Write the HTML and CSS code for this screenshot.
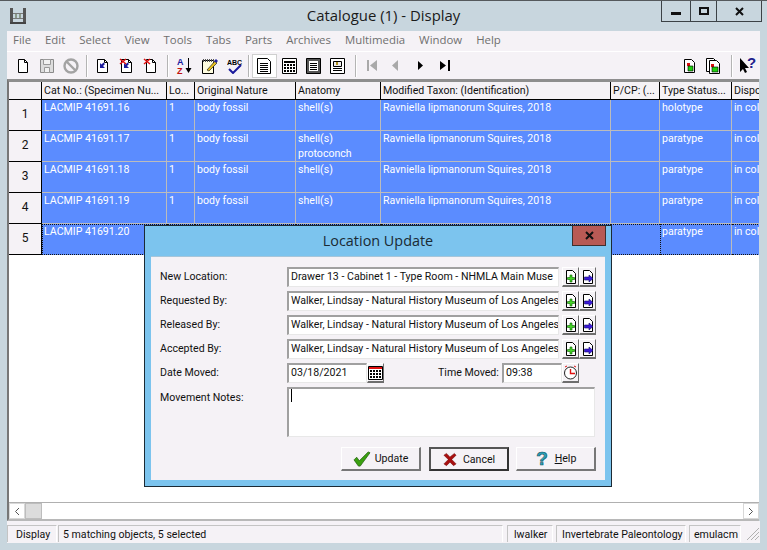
FILE: index.html
```html
<!DOCTYPE html>
<html lang="en">
<head>
    <meta charset="UTF-8">
    <title>Catalogue (1) - Display</title>
    <link rel="stylesheet" href="styles.css">
</head>
<body>
    <svg class="defs" width="0" height="0">
        <symbol id="doc" viewBox="0 0 16 16"><path d="M3.5 1.5h6l3 3v10h-9z" fill="#fff" stroke="#000"/><path d="M9.5 1.5v3h3" fill="none" stroke="#000"/></symbol>
        <symbol id="docback" viewBox="0 0 16 16"><path d="M2.5 1.5h7l3 3v10h-10z" fill="#fff" stroke="#000"/><path d="M9.5 1.5v3h3" fill="none" stroke="#000"/><path d="M5 5v5h5l-2-2 2-2-1.5-1.5-2 2z" fill="#1a1a9c"/></symbol>
        <symbol id="add" viewBox="0 0 14 16"><path d="M2.5 1.5h6l3 3v10h-9z" fill="#fff" stroke="#000"/><path d="M6 6h2v2.5h2.5v2H8V13H6v-2.5H3.5v-2H6z" fill="#46d828" stroke="#0a5a00" stroke-width=".6"/></symbol>
        <symbol id="go" viewBox="0 0 14 16"><path d="M2.5 1.5h6l3 3v10h-9z" fill="#fff" stroke="#000"/><path d="M3.5 8H8V6l4 3.5L8 13v-2H3.5z" fill="#3a18d8" stroke="#10086a" stroke-width=".6"/></symbol>
    </svg>

    <div class="window">
        <div class="titlebar">
            <svg class="appicon" width="18" height="18" viewBox="0 0 18 18"><path d="M1 1h3v16H1zM14 1h3v16h-3z" fill="#555"/><path d="M1 15h16v2H1z" fill="#444"/><path d="M4 6h10v1H4zM4 11h10v1H4z" fill="#777"/><path d="M6 7h2v4H6zM10 7h2v4h-2z" fill="#8a9a8a"/></svg>
            <div class="title">Catalogue (1) - Display</div>
            <div class="caption">
                <div class="capbtn capmin"><span></span></div>
                <div class="capbtn capmax"><span></span></div>
                <div class="capbtn capclose">
                    <svg width="9" height="9" viewBox="0 0 9 9"><path d="M1 1l7 7M8 1L1 8" stroke="#111" stroke-width="2"/></svg>
                </div>
            </div>
        </div>

        <div class="client">
            <div class="menubar">
                <span>File</span><span>Edit</span><span>Select</span><span>View</span><span>Tools</span><span>Tabs</span><span>Parts</span><span>Archives</span><span>Multimedia</span><span>Window</span><span>Help</span>
            </div>

            <div class="toolbar">
                <svg class="tool" width="16" height="16"><use href="#doc"/></svg>
                <svg class="tool" width="16" height="16" viewBox="0 0 16 16"><path d="M1.5 1.5h13v13h-13z" fill="#ddd" stroke="#8a8a8a"/><path d="M4.5 1.5h7v5h-7zM5.5 9.5h5v5h-5z" fill="#f2f2f2" stroke="#9a9a9a"/></svg>
                <svg class="tool" width="16" height="16" viewBox="0 0 16 16"><circle cx="8" cy="8" r="6.5" fill="none" stroke="#a3a3a3" stroke-width="2.4"/><path d="M3.5 3.5l9 9" stroke="#a3a3a3" stroke-width="2.4"/></svg>
                <i class="sep first"></i>
                <svg class="tool" width="16" height="16"><use href="#docback"/></svg>
                <svg class="tool" width="16" height="16" viewBox="0 0 16 16"><use href="#docback"/><path d="M1 1l6 5M7 1L1 6" stroke="#e01010" stroke-width="1.5"/></svg>
                <svg class="tool" width="16" height="16" viewBox="0 0 16 16"><use href="#doc"/><path d="M1 1l6 5M7 1L1 6" stroke="#e01010" stroke-width="1.5"/></svg>
                <i class="sep"></i>
                <svg class="tool sort" width="18" height="18" viewBox="0 0 18 18"><text x="1" y="8" class="sorta">A</text><text x="1" y="17" class="sortz">Z</text><path d="M12.5 1v13" stroke="#000"/><path d="M9.5 11h6l-3 5z"/></svg>
                <svg class="tool" width="18" height="18" viewBox="0 0 18 18"><path d="M1.5 3.5h11v13h-11z" fill="#fffde0" stroke="#000"/><path d="M2.5 2v3M4.5 2v3M6.5 2v3M8.5 2v3M10.5 2v3M12.5 2v3" stroke="#555"/><path d="M6 13l8-9 2 2-8 8z" fill="#e8c020" stroke="#222" stroke-width=".7"/><path d="M13 4l2-2 2 2-2 2z" fill="#2020a0"/></svg>
                <svg class="tool abcicon" width="16" height="16" viewBox="0 0 16 16"><text x="0" y="7" class="abc">ABC</text><path d="M2 11l4 4 8-8" fill="none" stroke="#1a1a9c" stroke-width="2"/></svg>
                <i class="sep"></i>
                <div class="pressed">
                    <svg width="16" height="16" viewBox="0 0 16 16"><path d="M.5.5h10l3 3v12H.5z" fill="#fff" stroke="#000"/><path d="M3 5.5h8M3 7.5h8M3 9.5h8M3 11.5h8M3 13.5h8" stroke="#000"/></svg>
                </div>
                <svg class="tool" width="16" height="16" viewBox="0 0 16 16"><path d="M.5.5h14v15H.5z" fill="#fff" stroke="#000"/><path d="M2 3h11v2H2zM2 6h2v2H2zM5 6h2v2H5zM8 6h2v2H8zM11 6h2v2h-2zM2 9h2v2H2zM5 9h2v2H5zM8 9h2v2H8zM11 9h2v2h-2zM2 12h2v2H2zM5 12h2v2H5zM8 12h2v2H8zM11 12h2v2h-2z"/></svg>
                <svg class="tool" width="16" height="16" viewBox="0 0 16 16"><path d="M.5.5h14v15H.5z" fill="#555" stroke="#000"/><path d="M3 3h9v10H3z" fill="#fff"/><path d="M4 5.5h7M4 7.5h7M4 9.5h7M4 11.5h7" stroke="#000"/></svg>
                <svg class="tool lastview" width="16" height="16" viewBox="0 0 16 16"><path d="M.5.5h14v15H.5z" fill="#fff" stroke="#000"/><path d="M3.5 3.5h8v5h-8z" fill="#eee" stroke="#000"/><path d="M3 10.5h9M3 12.5h9" stroke="#000"/><path d="M6 4h2v3H6z" fill="#b09020"/></svg>
                <i class="sep navsep"></i>
                <svg class="tool navfirst" width="10" height="11" viewBox="0 0 10 11"><path d="M0 0h2v11H0zM10 0v11L3 5.5z" fill="#a9a9a9"/></svg>
                <svg class="tool navprev" width="8" height="11" viewBox="0 0 8 11"><path d="M7 0v11L1 5.5z" fill="#a9a9a9"/></svg>
                <svg class="tool navnext" width="8" height="11" viewBox="0 0 8 11"><path d="M2 1v9l5-4.5z"/></svg>
                <svg class="tool" width="10" height="11" viewBox="0 0 10 11"><path d="M0 1v9l6-4.5zM8 0h2v11H8z"/></svg>
                <div class="spacer"></div>
                <svg class="tool part1" width="14" height="16" viewBox="0 0 14 16"><path d="M1.5 1.5h7l3 3v10h-10z" fill="#fff" stroke="#000"/><path d="M4 5h3v3H4z" fill="#d81010"/><path d="M5 8h5v5H5z" fill="#20d010" stroke="#000" stroke-width=".6"/></svg>
                <svg class="tool part2" width="14" height="16" viewBox="0 0 14 16"><path d="M.5.5h7l3 3v10H.5z" fill="#fff" stroke="#000"/><path d="M3.5 2.5h7l3 3v10h-10z" fill="#fff" stroke="#000"/><path d="M5 6h3v3H5z" fill="#d81010"/><path d="M6 9h6v5H6z" fill="#20d010" stroke="#000" stroke-width=".6"/></svg>
                <i class="sep"></i>
                <svg class="tool help" width="17" height="17" viewBox="0 0 17 17"><path d="M1 1v14l3-3 2 4 2-1-2-4h4z"/><text x="8" y="11" class="q">?</text></svg>
            </div>

            <div class="gridframe">
                <div class="grid">
                    <div class="corner"></div>
                    <div class="hcell">Cat No.: (Specimen Nu...</div>
                    <div class="hcell">Lo...</div>
                    <div class="hcell">Original Nature</div>
                    <div class="hcell">Anatomy</div>
                    <div class="hcell">Modified Taxon: (Identification)</div>
                    <div class="hcell">P/CP: (...</div>
                    <div class="hcell">Type Status...</div>
                    <div class="hcell">Dispo</div>

                    <div class="rowhead">1</div>
                    <div class="cell">LACMIP 41691.16</div><div class="cell">1</div><div class="cell">body fossil</div><div class="cell">shell(s)</div><div class="cell">Ravniella lipmanorum Squires, 2018</div><div class="cell"></div><div class="cell">holotype</div><div class="cell">in col</div>

                    <div class="rowhead">2</div>
                    <div class="cell">LACMIP 41691.17</div><div class="cell">1</div><div class="cell">body fossil</div><div class="cell">shell(s)<br>protoconch</div><div class="cell">Ravniella lipmanorum Squires, 2018</div><div class="cell"></div><div class="cell">paratype</div><div class="cell">in col</div>

                    <div class="rowhead">3</div>
                    <div class="cell">LACMIP 41691.18</div><div class="cell">1</div><div class="cell">body fossil</div><div class="cell">shell(s)</div><div class="cell">Ravniella lipmanorum Squires, 2018</div><div class="cell"></div><div class="cell">paratype</div><div class="cell">in col</div>

                    <div class="rowhead">4</div>
                    <div class="cell">LACMIP 41691.19</div><div class="cell">1</div><div class="cell">body fossil</div><div class="cell">shell(s)</div><div class="cell">Ravniella lipmanorum Squires, 2018</div><div class="cell"></div><div class="cell">paratype</div><div class="cell">in col</div>

                    <div class="rowhead">5</div>
                    <div class="cell focus start">LACMIP 41691.20</div><div class="cell focus"></div><div class="cell focus"></div><div class="cell focus"></div><div class="cell focus"></div><div class="cell focus"></div><div class="cell focus start split">paratype</div><div class="cell focus">in col</div>
                </div>
                <div class="gridfill"></div>
                <div class="hscroll">
                    <div class="sbtn"><svg width="6" height="9" viewBox="0 0 6 9"><path d="M5 1L1.5 4.5 5 8" fill="none" stroke="#555"/></svg></div>
                    <div class="thumb"></div>
                    <div class="track"></div>
                    <div class="sbtn"><svg width="6" height="9" viewBox="0 0 6 9"><path d="M1 1l3.5 3.5L1 8" fill="none" stroke="#555"/></svg></div>
                </div>
            </div>

            <div class="statusbar">
                <div class="panel p1">Display</div>
                <div class="panel p2">5 matching objects, 5 selected</div>
                <div class="panel p3">lwalker</div>
                <div class="panel p4">Invertebrate Paleontology</div>
                <div class="panel p5">emulacm</div>
                <svg class="grip" width="16" height="16" viewBox="0 0 16 16"><path d="M3 15L15 3M7 15L15 7M11 15l4-4" stroke="#b0b0b0"/></svg>
            </div>
        </div>

        <!-- Location Update dialog -->
        <div class="dialog">
            <div class="dlgtitle">
                <span>Location Update</span>
                <div class="dlgclose"><svg width="9" height="9" viewBox="0 0 9 9"><path d="M1 1l7 7M8 1L1 8" stroke="#111" stroke-width="2"/></svg></div>
            </div>
            <div class="dlgbody">
                <div class="frow">
                    <label>New Location:</label>
                    <div class="field wide">Drawer 13 - Cabinet 1 - Type Room - NHMLA Main Muse</div>
                    <div class="ibtn"><svg width="14" height="16"><use href="#add"/></svg></div>
                    <div class="ibtn"><svg width="14" height="16"><use href="#go"/></svg></div>
                </div>
                <div class="frow">
                    <label>Requested By:</label>
                    <div class="field wide">Walker, Lindsay - Natural History Museum of Los Angeles</div>
                    <div class="ibtn"><svg width="14" height="16"><use href="#add"/></svg></div>
                    <div class="ibtn"><svg width="14" height="16"><use href="#go"/></svg></div>
                </div>
                <div class="frow">
                    <label>Released By:</label>
                    <div class="field wide">Walker, Lindsay - Natural History Museum of Los Angeles</div>
                    <div class="ibtn"><svg width="14" height="16"><use href="#add"/></svg></div>
                    <div class="ibtn"><svg width="14" height="16"><use href="#go"/></svg></div>
                </div>
                <div class="frow">
                    <label>Accepted By:</label>
                    <div class="field wide">Walker, Lindsay - Natural History Museum of Los Angeles</div>
                    <div class="ibtn"><svg width="14" height="16"><use href="#add"/></svg></div>
                    <div class="ibtn"><svg width="14" height="16"><use href="#go"/></svg></div>
                </div>
                <div class="frow">
                    <label>Date Moved:</label>
                    <div class="field date">03/18/2021</div>
                    <div class="ibtn">
                        <svg width="15" height="15" viewBox="0 0 15 15"><path d="M.5 1.5h14v13H.5z" fill="#fff" stroke="#000"/><path d="M1 2h13v2H1z" fill="#e01010"/><path d="M2 5h2v2H2zM5 5h2v2H5zM8 5h2v2H8zM11 5h2v2h-2zM2 8h2v2H2zM5 8h2v2H5zM8 8h2v2H8zM11 8h2v2h-2zM2 11h2v2H2zM5 11h2v2H5zM8 11h2v2H8zM11 11h2v2h-2z"/></svg>
                    </div>
                    <label class="timelabel">Time Moved:</label>
                    <div class="field time">09:38</div>
                    <div class="ibtn">
                        <svg width="15" height="15" viewBox="0 0 15 15"><circle cx="7.5" cy="8" r="6" fill="#fff" stroke="#222"/><path d="M7.5 4v4.5H12" fill="none" stroke="#e01010" stroke-width="1.4"/><path d="M2 2l2-1M13 2l-2-1" stroke="#e01010"/></svg>
                    </div>
                </div>
                <div class="frow notesrow">
                    <label>Movement Notes:</label>
                    <div class="field notes"><i class="caret"></i></div>
                </div>
                <div class="actions">
                    <div class="btn">
                        <svg width="18" height="16" viewBox="0 0 20 18"><path d="M1 10l3-3 3 4L17 1l2 1L8 17H6z" fill="#3aa010" stroke="#1c5a08" stroke-width=".8"/></svg>
                        <span>Update</span>
                    </div>
                    <div class="btn default">
                        <svg width="14" height="15" viewBox="0 0 16 16"><path d="M1 3l3-2 4 4 5-4 2 2-5 5 5 5-3 2-4-4-4 4-3-2 5-5z" fill="#a81010" stroke="#600" stroke-width=".5"/></svg>
                        <span>Cancel</span>
                    </div>
                    <div class="btn helpbtn">
                        <svg width="14" height="19" viewBox="0 0 14 19"><text x="7" y="16" class="helpq">?</text></svg>
                        <span><u>H</u>elp</span>
                    </div>
                </div>
            </div>
        </div>
    </div>
</body>
</html>
```

FILE: styles.css
```css
* {
    margin: 0;
    padding: 0;
    box-sizing: border-box;
}

html, body {
    width: 767px;
    height: 550px;
    overflow: hidden;
}

body {
    font-family: Roboto, "Liberation Sans", sans-serif;
    font-size: 10.6px;
    color: #111;
}

.defs {
    display: block;
    height: 0;
    position: absolute;
}

.window {
    position: relative;
    width: 767px;
    height: 550px;
    background: #c8d6de;
    border-top: 1px solid #55595c;
}

/* title bar */
.titlebar {
    display: grid;
    grid-template-columns: 1fr auto 1fr;
    height: 30px;
    padding: 0 5px;
}

.appicon {
    margin: 6px 0 0 4px;
}

.title {
    font-family: "Open Sans", sans-serif;
    font-size: 14.9px;
    color: #1a1a1a;
    line-height: 29px;
}

.caption {
    display: flex;
    justify-self: end;
    height: 21px;
    border: 1px solid #3c4246;
    border-top: 0;
}

.capbtn {
    display: flex;
    align-items: center;
    justify-content: center;
    border-left: 1px solid #3c4246;
}

.capmin {
    width: 28px;
    border-left: 0;
}

.capmin span {
    width: 10px;
    height: 3px;
    margin-top: 4px;
    background: #111;
}

.capmax {
    width: 26px;
}

.capmax span {
    width: 10px;
    height: 8px;
    border: 2px solid #111;
}

.capclose {
    width: 45px;
}

/* main client area */
.client {
    width: 753px;
    margin-left: 7px;
}

.menubar {
    display: flex;
    gap: 14px;
    height: 21px;
    padding-left: 6px;
    background: #f5f2f6;
    color: #6f6f6f;
    font-family: "Open Sans", sans-serif;
    font-size: 11.4px;
    line-height: 18px;
    border-bottom: 1px solid #fff;
}

.toolbar {
    display: flex;
    align-items: center;
    height: 27px;
    padding-left: 8px;
    background: #f5f2f6;
}

.tool {
    flex: none;
    margin-right: 8px;
}

.sep {
    flex: none;
    width: 2px;
    height: 22px;
    margin: 0 7px 0 0;
    background: #b4b4b4;
    border-right: 1px solid #fff;
}

.sep.first {
    margin-left: -1px;
}

.sort {
    margin-right: 7px;
}

.abcicon {
    margin-right: 5px;
}

.pressed {
    display: flex;
    align-items: center;
    justify-content: center;
    flex: none;
    width: 25px;
    height: 24px;
    margin: 0 5px 0 -5px;
    background: #fff;
    border: 1px solid #cfcfcf;
}

.lastview {
    margin-right: 10px;
}

.sep.navsep {
    margin-left: -1px;
}

.navfirst {
    margin-left: 3px;
    margin-right: 14px;
}

.navprev {
    margin-right: 17px;
}

.navnext {
    margin-right: 16px;
}

.spacer {
    flex: 1;
}

.part1 {
    margin-right: 9px;
}

.part2 {
    margin-right: 11px;
}

.help {
    margin-left: -1px;
    margin-right: 4px;
}

.sorta, .sortz {
    font-family: "Liberation Sans", sans-serif;
    font-weight: bold;
    font-size: 9px;
}

.sorta {
    fill: #1a1aa0;
}

.sortz {
    fill: #c01010;
}

.abc {
    font-size: 7px;
    font-weight: bold;
    font-family: "Liberation Sans", sans-serif;
}

.q {
    font-size: 15px;
    font-weight: bold;
    fill: #20208c;
    font-family: "Liberation Sans", sans-serif;
}

/* data grid */
.gridframe {
    height: 442px;
    margin-right: 1px;
    display: flex;
    flex-direction: column;
    background: #fff;
    border-top: 3px solid #8e8e8e;
    border-left: 2px solid #777;
    border-bottom: 2px solid #b8b8b8;
}

.grid {
    display: grid;
    grid-template-columns: 33px 125px 28px 101px 85px 230px 49px 72px 28px;
    grid-template-rows: 18px repeat(5, 31px);
    overflow: hidden;
    background: #fff;
}

.corner, .hcell {
    background: #f5f2f6;
    border-right: 1px solid #000;
    border-bottom: 1px solid #000;
}

.hcell {
    padding-left: 2px;
    line-height: 17px;
    white-space: nowrap;
    overflow: hidden;
}

.rowhead {
    display: flex;
    align-items: center;
    justify-content: center;
    padding-bottom: 2px;
    background: #f5f2f6;
    border-right: 1px solid #000;
    border-bottom: 1px solid #000;
    font-size: 12px;
}

.cell {
    padding: 0 0 0 2px;
    background: #5b8cff;
    color: #fff;
    line-height: 15px;
    border-right: 1px solid #bcbcbc;
    border-bottom: 1px solid #bcbcbc;
    white-space: nowrap;
    overflow: hidden;
}

/* current row has a dotted outline instead of cell lines */
.cell.focus {
    border-right: 0;
    border-top: 1px dotted #111;
    border-bottom: 1px dotted #111;
    line-height: 13px;
}

.cell.start {
    border-left: 1px dotted #111;
    padding-left: 1px;
}

.cell.split {
    border-right: 1px solid #bcbcbc;
}

.gridfill {
    flex: 1;
    border-bottom: 1px solid #b0b0b0;
}

.hscroll {
    display: flex;
    height: 16px;
}

.sbtn {
    display: flex;
    align-items: center;
    justify-content: center;
    flex: none;
    width: 16px;
    border: 1px solid #d8d8d8;
}

.thumb {
    flex: none;
    width: 17px;
    background: #dcdcdc;
    border: 1px solid #bdbdbd;
}

.track {
    flex: 1;
}

/* status bar */
.statusbar {
    display: flex;
    gap: 3px;
    height: 22px;
    padding-top: 4px;
    background: #f5f2f6;
}

.panel {
    height: 17px;
    line-height: 17px;
    background: #f5f2f6;
    border-top: 1px solid #c4c4c4;
    border-left: 1px solid #c4c4c4;
    border-right: 1px solid #fff;
    padding-left: 6px;
    white-space: nowrap;
}

.p1 {
    width: 50px;
    padding-left: 8px;
    margin-right: -2px;
}

.p2 {
    width: 445px;
    padding-left: 4px;
}

.p3 {
    width: 46px;
    margin-left: 1px;
}

.p4 {
    width: 130px;
    padding-left: 5px;
}

.p5 {
    width: 52px;
    padding-left: 4px;
}

/* location update dialog */
.dialog {
    position: absolute;
    left: 144px;
    top: 224px;
    width: 468px;
    height: 262px;
    padding: 0 6px 6px;
    background: #7cc4ee;
    border: 1px solid #1c2a34;
    display: flex;
    flex-direction: column;
}

.dlgtitle {
    display: flex;
    justify-content: center;
    flex: none;
    height: 30px;
    font-family: "Open Sans", sans-serif;
    font-size: 14.4px;
    line-height: 30px;
    color: #1a2a34;
    position: relative;
}

.dlgclose {
    position: absolute;
    right: -1px;
    top: 0;
    display: flex;
    align-items: center;
    justify-content: center;
    width: 34px;
    height: 20px;
    background: #b85a55;
    border: 1px solid #40302e;
    border-top: 0;
}

.dlgbody {
    flex: 1;
    padding: 10px 9px 0 9px;
    background: #f5f2f6;
    border-top: 1px solid #a6c6da;
}

.frow {
    display: flex;
    align-items: center;
    height: 20px;
    margin-bottom: 4px;
}

.frow label {
    flex: none;
    width: 127px;
    padding-bottom: 1px;
    white-space: nowrap;
}

.frow .timelabel {
    width: 64px;
    margin-left: 54px;
}

.field {
    height: 20px;
    padding-left: 2px;
    line-height: 15px;
    background: #fff;
    border-top: 2px solid #a0a0a0;
    border-left: 2px solid #a0a0a0;
    border-right: 1px solid #e8e8e8;
    border-bottom: 1px solid #e8e8e8;
    white-space: nowrap;
    overflow: hidden;
}

.wide {
    width: 273px;
    margin-right: 3px;
}

.date {
    width: 80px;
}

.time {
    width: 60px;
}

.ibtn {
    display: flex;
    align-items: center;
    justify-content: center;
    flex: none;
    width: 17px;
    height: 20px;
    background: #f5f2f6;
    border-top: 1px solid #fff;
    border-left: 1px solid #fff;
    border-right: 1px solid #6e6e6e;
    border-bottom: 2px solid #6e6e6e;
}

.notesrow {
    align-items: flex-start;
    height: 50px;
    margin-bottom: 10px;
}

.notesrow label {
    margin-top: 4px;
}

.notes {
    width: 308px;
    height: 50px;
}

.caret {
    display: block;
    width: 1px;
    height: 13px;
    background: #000;
}

.actions {
    display: flex;
    justify-content: flex-end;
    gap: 8px;
}

.btn {
    display: flex;
    align-items: center;
    justify-content: center;
    gap: 4px;
    width: 80px;
    height: 24px;
    background: #f5f2f6;
    border-top: 1px solid #fff;
    border-left: 1px solid #fff;
    border-right: 2px solid #777;
    border-bottom: 2px solid #777;
}

.btn.default {
    gap: 6px;
    margin-right: -1px;
    border: 2px solid #555;
    border-bottom-color: #333;
    border-right-color: #333;
}

.helpbtn {
    gap: 6px;
}

.helpq {
    font-family: "Liberation Sans", sans-serif;
    font-size: 19px;
    font-weight: bold;
    text-anchor: middle;
    fill: #2aa0b8;
    stroke: #14505c;
    stroke-width: .6px;
}
```
